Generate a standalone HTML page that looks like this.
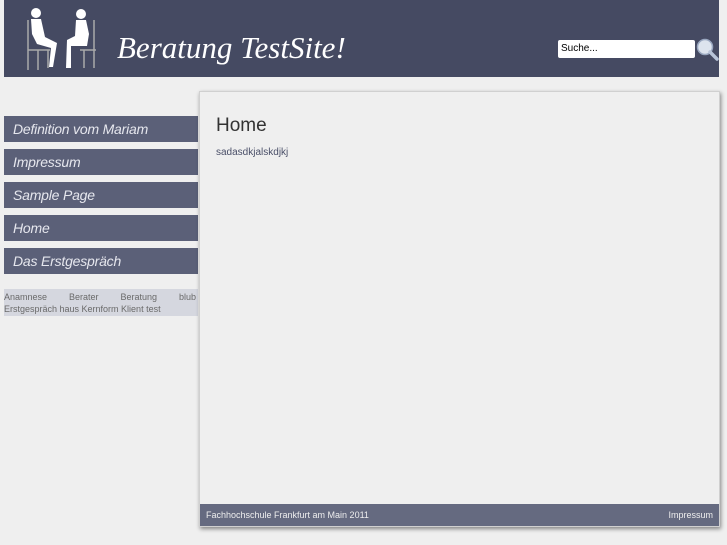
<!DOCTYPE html>
<html><head><meta charset="utf-8"><style>
body{margin:0;width:727px;height:545px;background:#efefef;font-family:"Liberation Sans",sans-serif;position:relative;overflow:hidden}
.hdr{position:absolute;left:4px;top:0;width:715px;height:77px;background:#454a62}
.title{position:absolute;left:113px;top:30px;font-family:"Liberation Serif",serif;font-style:italic;font-size:31px;color:#fff}
.search{position:absolute;left:554px;top:40px;width:137px;height:18px;background:#fff;border-radius:2px;font-size:10px;line-height:18px;padding-left:3px;box-sizing:border-box;color:#000}
.nav{position:absolute;left:4px;width:194px;height:26px;background:#5b6078;color:#e6e7ee;font-style:italic;font-size:14px;line-height:26px;padding-left:9px;box-sizing:border-box;letter-spacing:-0.2px}
.tags{position:absolute;left:4px;top:289px;width:194px;height:27px;background:#d5d7df;font-size:9px;color:#6a6a6a;line-height:12px;padding-top:2px;box-sizing:border-box}
.main{position:absolute;left:199px;top:91px;width:521px;height:436px;background:#efefef;border:1px solid #d0d0d0;box-shadow:1px 2px 4px rgba(0,0,0,.45);box-sizing:border-box}
.foot{position:absolute;left:0;bottom:0;width:100%;height:22px;background:#656a80;color:#eee;font-size:9px;line-height:22px}
</style></head><body>
<div class="hdr">
<svg style="position:absolute;left:20px;top:4px" width="80" height="70" viewBox="0 0 80 70">
<g stroke="#aaa" stroke-width="1.5" fill="none"><path d="M4 16v50M14 46v20M4 46h22M24 46v18M70 16v48M60 46v18M56 46h16"/></g>
<g fill="#fff"><circle cx="12" cy="9" r="5"/><path d="M7 15h10l4 18l12 6l-4 24h-4l2-19l-14-4l-5-10z"/><circle cx="57" cy="10" r="5"/><path d="M52 16h10l3 14l-2 12l-16 0l0 22h-5l1-28l8-4z"/></g>
</svg>
<div class="title">Beratung TestSite!</div>
<div class="search">Suche...</div>
<svg style="position:absolute;left:692px;top:38px" width="24" height="24" viewBox="0 0 24 24"><circle cx="9" cy="9" r="7.5" fill="#dde4ee" stroke="#9aa8c0" stroke-width="1.5"/><path d="M14 14l7 7" stroke="#b8c4d8" stroke-width="3.5" stroke-linecap="round"/></svg>
</div>
<div class="nav" style="top:116px">Definition vom Mariam</div>
<div class="nav" style="top:149px">Impressum</div>
<div class="nav" style="top:182px">Sample Page</div>
<div class="nav" style="top:215px">Home</div>
<div class="nav" style="top:248px">Das Erstgespräch</div>
<div class="tags"><div style="display:flex;justify-content:space-between;padding-right:2px"><span>Anamnese</span><span>Berater</span><span>Beratung</span><span>blub</span></div>Erstgespräch haus Kernform Klient test</div>
<div class="main">
<div style="position:absolute;left:16px;top:23px;font-size:19px;color:#333">Home</div>
<div style="position:absolute;left:16px;top:55px;font-size:10px;color:#4a4f68">sadasdkjalskdjkj</div>
<div class="foot"><span style="position:absolute;left:6px">Fachhochschule Frankfurt am Main 2011</span><span style="position:absolute;right:6px">Impressum</span></div>
</div>
</body></html>
